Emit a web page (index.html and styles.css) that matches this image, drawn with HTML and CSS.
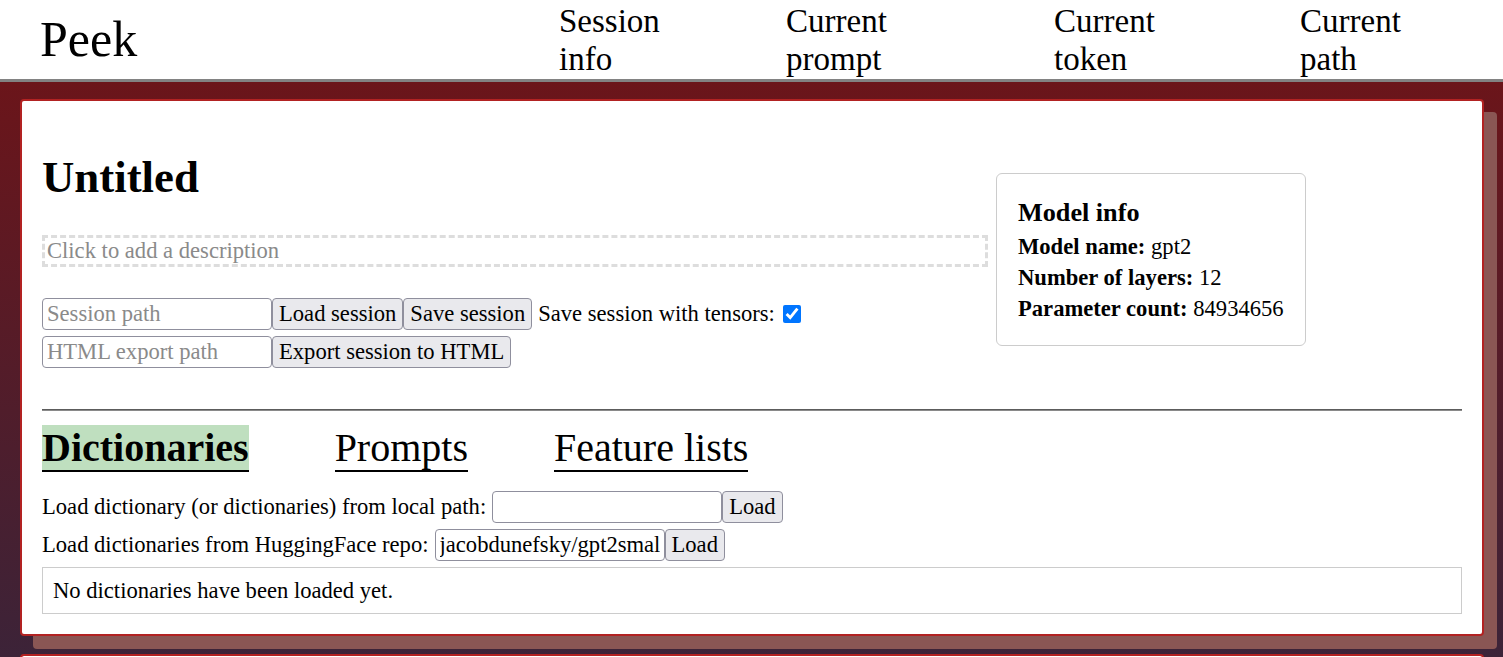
FILE: index.html
```html
<!DOCTYPE html>
<html lang="en">
<head>
<meta charset="utf-8">
<title>Peek</title>
<link rel="stylesheet" href="styles.css">
</head>
<body>
<header class="topbar">
  <div class="brand">Peek</div>
  <div class="nav-item"><span class="nav-label">Session info</span></div>
  <div class="nav-item"><span class="nav-label">Current prompt</span></div>
  <div class="nav-item"><span class="nav-label">Current token</span></div>
  <div class="nav-item"><span class="nav-label">Current path</span></div>
</header>
<main class="main">
  <section class="card">
    <div class="session-top">
      <div class="session-left">
        <h1 class="title">Untitled</h1>
        <div class="description">Click to add a description</div>
        <div class="controls">
          <div class="row">
            <input class="field" type="text" placeholder="Session path"><button class="btn">Load session</button><button class="btn">Save session</button><span class="label-after">Save session with tensors:</span><input class="check" type="checkbox" checked>
          </div>
          <div class="row">
            <input class="field" type="text" placeholder="HTML export path"><button class="btn">Export session to HTML</button>
          </div>
        </div>
      </div>
      <div class="model-box">
        <h3 class="model-title">Model info</h3>
        <div class="model-line"><b>Model name:</b> gpt2</div>
        <div class="model-line"><b>Number of layers:</b> 12</div>
        <div class="model-line"><b>Parameter count:</b> 84934656</div>
      </div>
    </div>
    <hr class="divider">
    <div class="tabs">
      <div class="tab tab-active">Dictionaries</div>
      <div class="tab">Prompts</div>
      <div class="tab">Feature lists</div>
    </div>
    <div class="dict-rows">
      <div class="row">
        <span class="label-before">Load dictionary (or dictionaries) from local path:</span><input class="field" type="text"><button class="btn">Load</button>
      </div>
      <div class="row">
        <span class="label-before">Load dictionaries from HuggingFace repo:</span><input class="field" type="text" value="jacobdunefsky/gpt2small-sparse-autoencoders"><button class="btn">Load</button>
      </div>
    </div>
    <div class="status">No dictionaries have been loaded yet.</div>
  </section>
  <section class="card card-next"></section>
</main>
</body>
</html>
```

FILE: styles.css
```css
html, body {
  margin: 0;
  padding: 0;
}

body {
  font-family: "Liberation Serif", "Times New Roman", serif;
  font-size: 22.6px;
  color: #000;
  background: linear-gradient(#6b151a 0px, #6b151a 82px, #3c2338 657px) fixed;
  min-height: 100vh;
}

.topbar {
  display: grid;
  grid-template-columns: 519px 227px 268px 246px 1fr;
  align-items: center;
  height: 79px;
  padding-left: 40px;
  background: #fff;
  border-bottom: 3px solid #828282;
}

.brand {
  font-size: 50px;
  line-height: 57px;
}

.nav-item {
  font-size: 33px;
  line-height: 38px;
}

.nav-label {
  display: inline-block;
  max-width: 4em;
}

.main {
  padding: 17px 19px 0 20px;
}

.card {
  background: #fff;
  border: 2px solid #b22222;
  border-radius: 4px;
  padding: 20px;
  box-shadow: 13px 13px 0 #8a5654;
}

.card-next {
  margin-top: 18px;
  height: 200px;
}

.session-top {
  display: flex;
  align-items: flex-start;
  gap: 8px;
}

.session-left {
  width: 946px;
}

.title {
  font-size: 44.8px;
  font-weight: bold;
  line-height: 51.5px;
  margin: 31px 0 31px;
}

.description {
  border: 3px dashed #ddd;
  padding: 0 2px;
  line-height: 26px;
  color: #8a8a8a;
}

.controls {
  margin-top: 31px;
}

.row {
  display: flex;
  align-items: center;
  height: 32px;
  margin-bottom: 6px;
}

.row:last-child {
  margin-bottom: 0;
}

.field {
  box-sizing: border-box;
  width: 230px;
  height: 32px;
  margin: 0;
  padding: 0 4px;
  border: 1px solid #8f8f9d;
  border-radius: 4px;
  font-family: "Liberation Serif", "Times New Roman", serif;
  font-size: 22.6px;
  color: #000;
  background: #fff;
}

.field::placeholder {
  color: #8a8a8a;
}

.btn {
  box-sizing: border-box;
  height: 32px;
  margin: 0;
  padding: 0 6px;
  border: 1px solid #8f8f9d;
  border-radius: 4px;
  background: #e9e9ed;
  font-family: "Liberation Serif", "Times New Roman", serif;
  font-size: 22.6px;
  color: #000;
}

.label-after {
  margin-left: 6px;
}

.label-before {
  margin-right: 6px;
}

.check {
  width: 18px;
  height: 18px;
  margin: 0 0 0 8px;
}

.model-box {
  margin-top: 52px;
  padding: 24px 21px 21px 21px;
  border: 1px solid #ccc;
  border-radius: 6px;
}

.model-title {
  font-size: 26.2px;
  font-weight: bold;
  line-height: 30px;
  margin: 0 0 3px;
}

.model-line {
  line-height: 31px;
  white-space: nowrap;
}

.divider {
  margin: 41px 0 0;
  height: 0;
  border: 0;
  border-top: 1px solid #5c5c5c;
  border-bottom: 1px solid #8a8a8a;
}

.tabs {
  display: flex;
  gap: 86px;
  margin-top: 14px;
}

.tab {
  font-size: 40px;
  line-height: 44px;
  padding-top: 1px;
  border-bottom: 2px solid #000;
}

.tab-active {
  font-weight: bold;
  background: #bfdfbf;
}

.dict-rows {
  margin-top: 19px;
}

.dict-rows .row {
  margin-bottom: 6px;
}

.status {
  border: 1px solid #ccc;
  padding: 10px;
  line-height: 25px;
}
```
